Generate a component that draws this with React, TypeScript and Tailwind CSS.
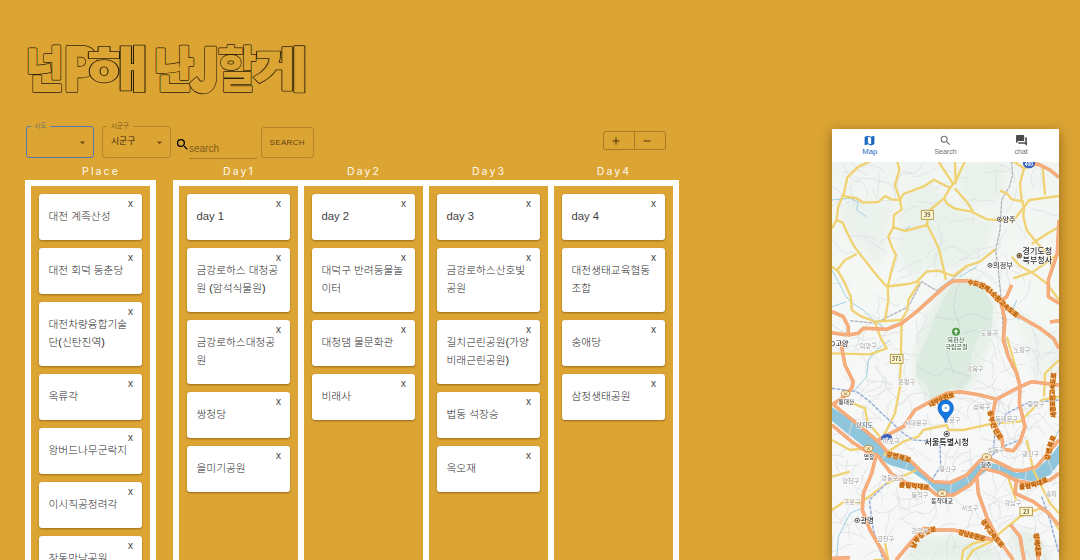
import React from "react";
import { MdMap, MdSearch, MdForum, MdArrowDropDown } from "react-icons/md";

const places: string[][] = [
  ["대전 계족산성"],
  ["대전 회덕 동춘당"],
  ["대전차량융합기술", "단(신탄진역)"],
  ["옥류각"],
  ["왕버드나무군락지"],
  ["이시직공정려각"],
  ["장동만남공원"],
];

const days: string[][][] = [
  [["day 1"], ["금강로하스 대청공", "원 (암석식물원)"], ["금강로하스대청공", "원"], ["쌍청당"], ["을미기공원"]],
  [["day 2"], ["대덕구 반려동물놀", "이터"], ["대청댐 물문화관"], ["비래사"]],
  [["day 3"], ["금강로하스산호빛", "공원"], ["길치근린공원(가양", "비래근린공원)"], ["법동 석장승"], ["옥오재"]],
  [["day 4"], ["대전생태교육협동", "조합"], ["송애당"], ["삼정생태공원"]],
];

function Card({ lines }: { lines: string[] }) {
  const latin = /^day/.test(lines[0]);
  return (
    <div className="w-full shrink-0 rounded-[3px] bg-white pb-[15px] pl-[9.5px] text-[#2a2a2a] shadow-[0_1px_2px_rgba(70,40,0,0.45)]">
      <div className="flex h-[13px] justify-end pt-[4px] pr-[9px] text-[10px] leading-[12px] text-[#444]">x</div>
      {lines.map((l) => (
        <div
          key={l}
          className={
            latin
              ? "h-[18px] text-[11.3px] leading-[19px] whitespace-nowrap text-[#3f3f3f]"
              : "h-[18px] text-[10.7px] leading-[18px] font-light whitespace-nowrap"
          }
        >
          {l}
        </div>
      ))}
    </div>
  );
}

function Column({ cards }: { cards: string[][] }) {
  return (
    <div className="flex w-[119px] flex-col gap-2 overflow-hidden bg-[#dca433] p-2">
      {cards.map((c) => (
        <Card key={c[0]} lines={c} />
      ))}
    </div>
  );
}

function Label({ children }: { children: React.ReactNode }) {
  return (
    <div className="w-[119px] pl-[17px] text-center font-['Inter',sans-serif] text-[10.5px] leading-[18px] tracking-[2.1px] text-[#fffaf0]">
      {children}
    </div>
  );
}

const title = [
  { c: "넌", x: 25.8, y: 86.8, sx: 0.86, s: 47.5, w: 3.4 },
  { c: "P", x: 63, y: 91, sx: 0.86, s: 59, w: 4 },
  { c: "난", x: 154.2, y: 86.8, sx: 0.9, s: 47.5, w: 3.4 },
  { c: "해", x: 86.5, y: 87.2, sx: 1.41, s: 48.5, w: 1.5 },
  { c: "J", x: 190, y: 90.5, sx: 0.86, s: 58, w: 4.4 },
  { c: "할", x: 217.5, y: 87.2, sx: 0.88, s: 48.5, w: 1.5 },
  { c: "게", x: 253, y: 87.2, sx: 1.25, s: 48, w: 2.2 },
];

function Title() {
  return (
    <svg width="285" height="56" viewBox="25 42 285 56" className="block overflow-visible">
      {title.map((t, i) => (
        <g key={t.c} strokeLinejoin="round">
          <g fill="#2a1f08" stroke="#2a1f08" strokeWidth={t.w}>
            <text
              id={`title-${i}`}
              transform={`translate(${t.x} ${t.y}) scale(${t.sx} 1)`}
              fontSize={t.s}
              fontWeight={900}
              fontFamily="'Noto Sans CJK KR', sans-serif"
            >
              {t.c}
            </text>
          </g>
          <use href={`#title-${i}`} fill="#dca433" stroke="#dca433" strokeWidth={Math.max(0, t.w - 1.5)} />
        </g>
      ))}
    </svg>
  );
}

const yellow = [
  "M150 124L115 140L82 172L72 220L54 262L50 300L36 325",
  "M50 300L68 308L80 335L100 375L118 400L165 460L200 500",
  "M70 228L110 235L130 248L175 246L195 228L215 238L240 240",
  "M232 124L238 150L225 195L240 240L245 268L222 285L220 322L205 350L215 380L228 405L215 450L203 500L205 540L195 600",
  "M220 322L255 333L322 315L340 350L358 390L378 480",
  "M240 240L250 222L310 200L342 179L378 198L392 202L403 188",
  "M355 124L375 155L400 192M405 124L407 190M435 124L420 155L404 192",
  "M392 200L372 235L330 270L320 315",
  "M372 235L382 252L405 266L455 275L500 298L580 302L605 270L628 240L717 228",
  "M404 205L440 245L460 275",
  "M580 124L612 145L600 190L605 240L612 262L610 290L620 330L650 368L690 410L695 440",
  "M540 212L560 220L575 238L612 245M668 140L675 225M612 145L660 130",
  "M200 500L215 498L265 492L290 485L320 455L355 452L400 468L440 438L480 425L525 388",
  "M50 452L75 420L110 402M36 440L55 455L75 490L92 530L95 570L125 590L165 605L245 600",
  "M300 485L265 540L262 570L245 600L243 700L240 800L225 880L185 960",
  "M635 372L675 345L717 320M575 410L600 438L640 460L680 490L717 540M580 475L640 455L717 400",
  "M165 605L180 650L200 685L150 703L36 700",
  "M75 840L135 865L142 905L180 950",
  "M190 1005L220 985L250 965L295 950L310 930L380 915L385 930L430 930L520 910L600 905L635 870L665 840L717 830",
  "M560 650L575 700L600 790M672 830L675 760L717 720",
  "M36 960L90 990L130 985L180 1010",
  "M36 1170L80 1140L120 1150L200 1090L290 1050",
  "M425 1320L430 1290L460 1270L520 1255L600 1190L660 1165L690 1180L717 1230",
  "M440 1320L460 1290L520 1262M195 1270L205 1320L160 1320",
  "M560 1060L590 1145M620 960L640 1050L690 1150L717 1180M36 1070L90 1055",
];

const orange = [
  "M36 575L70 590L85 620L85 645L115 640L130 625L200 628L245 610L290 575L340 530L380 495L400 483L440 482L490 495L530 535L600 590L660 625L700 655L717 685",
  "M36 638L80 645M62 665L75 735L100 785L95 805L72 830L36 855",
  "M575 495L560 530L542 545L555 600L550 660L565 710L590 760L600 800L598 850L615 920L600 965L580 992L550 988L545 950L515 900L527 838",
  "M175 960L250 920L285 870L340 840L380 820L420 815L480 825L530 838L580 810L635 785L717 795",
  "M717 300L712 400L685 480L685 530L717 550M690 606L717 602",
  "M625 125L660 135L690 150L717 172",
  "M36 850L60 870L140 935L180 970L205 1000L260 1012L300 1050L340 1085L390 1088L440 1065L480 1022L500 1012L540 1030L580 1050L610 1052L650 1040L680 1005L717 960",
  "M36 915L95 965L140 995L175 1010L215 1062L260 1090L320 1100L350 1125L400 1125L450 1095L490 1045L540 1058L590 1082L640 1092L690 1080L717 1060",
  "M170 1000L155 1060L130 1120L127 1170L150 1230L185 1290L200 1320",
  "M228 1320L270 1270L310 1225L350 1230L400 1230L450 1240L520 1260",
  "M470 1070L475 1120L500 1190L530 1250L580 1320",
  "M590 1075L585 1120L640 1145L680 1175L717 1215",
  "M572 1215L600 1250L612 1320M648 1240L655 1320M36 1315L90 1313",
];

const water = [
  "M36 450L55 485L75 525L90 545L130 570L165 605L190 620",
  "M36 240L90 235L115 245L110 270L140 290",
  "M210 660L170 690L145 720L140 770L100 815",
  "M255 328L270 320M470 440L420 470M36 560L80 545M590 540L575 580L600 600",
  "M640 1145L680 1170M50 1320L55 1250L90 1180L135 1160M717 930L700 965L690 1015",
];

const rail = [
  "M575 126L578 165L568 200L545 240L540 330L527 390L535 450L545 550L550 640L575 740L590 760",
  "M527 390L480 425L440 440L400 475L350 512L305 485L265 560L165 610L90 602",
];

const metro = [
  "M36 805L110 815L150 845L180 875L250 940L280 960L360 965L362 1040L335 1080",
  "M520 1000L525 930L560 880L620 850L717 840",
  "M200 1090L148 1140L160 1230L190 1320",
  "M665 1130L690 1200L700 1240L717 1300M480 1030L560 975L600 960",
];

function streets() {
  let seed = 17;
  const rnd = () => {
    seed = (seed * 16807) % 2147483647;
    return seed / 2147483647;
  };
  const out: string[] = [];
  for (let i = 0; i < 330; i++) {
    let x = 36 + rnd() * 681;
    let y = i < 90 ? 126 + rnd() * 560 : 640 + rnd() * 680;
    if (x > 300 && x < 510 && y > 500 && y < 810) continue;
    let a = rnd() * 6.28;
    let d = `M${x.toFixed(0)} ${y.toFixed(0)}`;
    for (let k = 0; k < 4; k++) {
      a += (rnd() - 0.5) * 1.3;
      x += Math.cos(a) * 20;
      y += Math.sin(a) * 20;
      d += `L${x.toFixed(0)} ${y.toFixed(0)}`;
    }
    out.push(d);
  }
  return out.join("");
}
const streetPath = streets();

type L = [string, number, number, number, string];
const labels: L[] = [
  ["양주", 567, 305, 21, "#333"],
  ["경기도청", 652, 402, 24, "#333"],
  ["북부청사", 652, 430, 24, "#333"],
  ["의정부", 549, 443, 21.5, "#444"],
  ["북한산", 408, 666, 18.5, "#4f7355"],
  ["국립공원", 409, 687, 18.5, "#4f7355"],
  ["고양", 66, 678, 21, "#333"],
  ["덕양구", 145, 685, 18.5, "#a0a0a0"],
  ["도봉구", 508, 646, 18.5, "#a0a0a0"],
  ["노원구", 606, 696, 18.5, "#a0a0a0"],
  ["강북구", 465, 754, 18.5, "#a0a0a0"],
  ["은평구", 260, 793, 18.5, "#a0a0a0"],
  ["성북구", 485, 866, 18.5, "#a0a0a0"],
  ["중랑구", 648, 857, 18.5, "#a0a0a0"],
  ["동대문구", 560, 903, 18.5, "#a0a0a0"],
  ["서대문구", 288, 915, 18.5, "#a0a0a0"],
  ["종로구", 396, 907, 18.5, "#a0a0a0"],
  ["마포구", 214, 968, 18.5, "#a0a0a0"],
  ["성동구", 528, 995, 18.5, "#a0a0a0"],
  ["광진구", 632, 1007, 18.5, "#a0a0a0"],
  ["통대산", 79, 851, 17, "#444"],
  ["난지도", 134, 922, 18.5, "#4f6f85"],
  ["염창", 147, 1016, 17, "#444"],
  ["서울특별시청", 380, 974, 24, "#222"],
  ["용산구", 384, 1053, 18.5, "#a0a0a0"],
  ["영등포구", 218, 1079, 18.5, "#a0a0a0"],
  ["양천구", 92, 1089, 18.5, "#a0a0a0"],
  ["동작구", 300, 1132, 18.5, "#a0a0a0"],
  ["동작대교", 366, 1150, 18, "#444"],
  ["구로구", 96, 1151, 18.5, "#a0a0a0"],
  ["청주", 498, 1040, 18, "#555"],
  ["서초구", 450, 1171, 18.5, "#a0a0a0"],
  ["강남구", 579, 1156, 18.5, "#a0a0a0"],
  ["송파", 694, 1129, 18.5, "#a0a0a0"],
  ["광명", 141, 1209, 22, "#333"],
  ["금천구", 197, 1262, 18.5, "#a0a0a0"],
  ["관악구", 300, 1240, 18.5, "#a0a0a0"],
];

const roadLabels: { t: string; d: string; n: number }[] = [
  { t: "수도권제1순환고속도로", d: "M443 487Q495 492 528 530T612 602", n: 185 },
  { t: "내부순환로", d: "M330 858Q365 828 430 820", n: 80 },
  { t: "강변북로", d: "M200 1003Q240 1010 290 1029", n: 74 },
  { t: "올림픽대로", d: "M238 1094L350 1106", n: 90 },
  { t: "올림픽대로", d: "M598 1100Q650 1102 705 1064", n: 88 },
  { t: "남부순환로", d: "M278 1284Q300 1225 365 1228", n: 95 },
  { t: "강남순환로", d: "M416 1236L515 1264", n: 82 },
  { t: "경부고속도로", d: "M488 1200Q510 1240 562 1295", n: 100 },
  { t: "동부간선로", d: "M510 872Q515 930 562 980", n: 92 },
  { t: "세종포천고속도로", d: "M702 893Q692 810 706 738", n: 135 },
  { t: "강변북로", d: "M683 1020Q688 970 712 930", n: 75 },
  { t: "양재대로", d: "M648 1240L656 1320", n: 70 },
];

function MapCanvas() {
  return (
    <svg width="227" height="398.5" viewBox="36 126 681 1195.5" className="block" fontFamily="'Noto Sans CJK KR', sans-serif">
      <defs>
        <linearGradient id="land" x1="0" y1="0" x2="0" y2="1">
          <stop offset="0" stopColor="#f1f5f1" />
          <stop offset="0.45" stopColor="#f6f8f6" />
          <stop offset="1" stopColor="#f7f7f8" />
        </linearGradient>
        <filter id="soft" x="-20%" y="-20%" width="140%" height="140%">
          <feGaussianBlur stdDeviation="10" />
        </filter>
      </defs>
      <rect x="36" y="126" width="681" height="1196" fill="url(#land)" />
      <g filter="url(#soft)" fill="#e6efe8">
        <path d="M250 220L340 190L380 240L450 285L520 310L500 390L400 450L320 440L280 480L230 400L240 320Z" opacity=".7" />
        <path d="M430 130L560 130L540 230L460 260L415 200Z" opacity=".7" />
        <path d="M90 240L220 250L200 330L180 440L110 380L60 290Z" opacity=".6" />
        <path d="M580 560L717 650L717 780L640 770L610 660Z" opacity=".5" />
        <path d="M290 1250L420 1250L520 1280L560 1320L250 1320Z" />
        <path d="M560 1230L640 1230L700 1320L590 1320Z" />
        <path d="M380 480L460 475L525 540L520 640L460 800L330 850L280 770L280 700L330 570Z" />
      </g>
      <path d="M400 492L445 488L490 505L520 560L515 625L480 645L455 700L452 780L425 808L395 800L335 842L318 790L288 770L290 720L320 660L345 590L370 540Z" fill="#dcebdf" />
      <path d="M410 500L400 560L420 620L380 700L400 760M345 590L400 600L460 580L510 600M290 740L350 770L380 745L450 770M430 640L470 630" fill="none" stroke="#c5d5cb" strokeWidth="2" />
      <path d={streetPath} fill="none" stroke="#dadde0" strokeWidth="2" />
      <g fill="none" stroke="#9fd0e4" strokeWidth="3">
        {water.map((d) => (
          <path key={d} d={d} />
        ))}
      </g>
      <path
        d="M36 862L100 903L150 945L185 975L205 1008L260 1018L300 1052L340 1085L400 1090L440 1070L485 1023L540 1035L590 1058L650 1048L690 1010L717 975L717 1030L690 1065L640 1085L580 1072L510 1045L475 1070L440 1105L400 1122L350 1115L320 1085L270 1052L210 1035L170 1010L100 955L36 903Z"
        fill="#8fc6dc"
      />
      <path d="M100 895L85 950M200 1000L180 1030M270 1015L255 1050M330 1070L318 1090M395 1085L390 1125M440 1065L450 1100M540 1030L535 1060M620 1050L615 1085M680 1010L700 1060" stroke="#d9dde0" strokeWidth="3" />
      <g fill="none" stroke="#d3d5d8" strokeWidth="4">
        {rail.map((d) => (
          <path key={d} d={d} />
        ))}
      </g>
      <g fill="none" stroke="#9ca1aa" strokeWidth="2.5" strokeDasharray="8 6">
        {rail.map((d) => (
          <path key={d} d={d} />
        ))}
      </g>
      <g fill="none" strokeLinejoin="round">
        <g stroke="#f0d272" strokeWidth="7">
          {yellow.map((d) => (
            <path key={d} d={d} />
          ))}
        </g>
        <g stroke="#d7e0ee" strokeWidth="5">
          {metro.map((d) => (
            <path key={d} d={d} />
          ))}
        </g>
        <g stroke="#8ba4cf" strokeWidth="3.5" strokeDasharray="9 6">
          {metro.map((d) => (
            <path key={d} d={d} />
          ))}
        </g>
        <g stroke="#ee9d6c" strokeWidth="10.500">
          {orange.map((d) => (
            <path key={d} d={d} />
          ))}
        </g>
        <g stroke="#f7ae7c" strokeWidth="8">
          {orange.map((d) => (
            <path key={d} d={d} />
          ))}
        </g>
      </g>
      {roadLabels.map((r, i) => (
        <g key={r.d}>
          <path id={`road-${i}`} d={r.d} fill="none" />
          <text fontSize="18.500" fontWeight="700" fill="#a8560c" stroke="#f5a64e" strokeWidth="3" paintOrder="stroke" dominantBaseline="middle">
            <textPath href={`#road-${i}`} textLength={r.n}>
              {r.t}
            </textPath>
          </text>
        </g>
      ))}
      <g fill="#fff7cf" stroke="#a98f3a" strokeWidth="2.5">
        <rect x="304" y="271" width="36" height="27" />
        <rect x="211" y="703" width="38" height="27" />
        <rect x="600" y="1162" width="37" height="25" />
      </g>
      <g fontSize="17" fill="#544a20" textAnchor="middle" fontWeight="500">
        <text x="322" y="291">39</text>
        <text x="230" y="723">371</text>
        <text x="618.5" y="1181">23</text>
      </g>
      <path d="M609 126H645V132Q641 145 627 145Q612 145 609 132Z" fill="#3b63c4" />
      <text x="627" y="138" fontSize="14" fontWeight="700" fill="#fff" textAnchor="middle">400</text>
      <path d="M184 960V950Q190 941 200 942Q212 941 216 950V960Z" fill="#3b63c4" />
      <g fill="#f9ecd0" stroke="#b5802e" strokeWidth="2.5">
        <ellipse cx="77" cy="821" rx="13" ry="9" />
        <ellipse cx="145" cy="985" rx="13" ry="9" />
        <ellipse cx="500" cy="1011" rx="14" ry="10" />
        <ellipse cx="367" cy="1120" rx="14" ry="10" />
        <path d="M72 818L82 825M82 818L72 825M140 982L150 989M150 982L140 989M495 1008L505 1015M505 1008L495 1015M362 1117L372 1124M372 1117L362 1124" />
      </g>
      <circle cx="408" cy="635" r="12" fill="#4f9a45" />
      <path d="M408 627L414 636H410V643H406V636H402Z" fill="#fff" />
      <g textAnchor="middle">
        {labels.map(([t, x, y, s, c]) => (
          <text key={t} x={x} y={y} fontSize={s} fill={c} fontWeight={c === "#a0a0a0" ? 400 : 500} stroke="#fff" strokeOpacity="0.85" strokeWidth="4" strokeLinejoin="round" paintOrder="stroke">
            {t}
          </text>
        ))}
      </g>
      <g fill="#fff" stroke="#444" strokeWidth="2.5">
        <circle cx="538" cy="298" r="6" />
        <circle cx="510" cy="436" r="6" />
        <circle cx="598" cy="407" r="7" fill="#c9a256" />
        <circle cx="38" cy="671" r="6" />
        <circle cx="112" cy="1201" r="6.5" />
        <circle cx="380" cy="942" r="8" />
      </g>
      <g fill="#333">
        <circle cx="538" cy="298" r="2.4" />
        <circle cx="510" cy="436" r="2.4" />
        <circle cx="598" cy="407" r="2.6" />
        <circle cx="112" cy="1201" r="2.6" />
        <circle cx="380" cy="942" r="4" />
      </g>
      <path d="M377 908C373 889 354 884 354 863A23 23 0 0 1 400 863C400 884 381 889 377 908Z" fill="#1478e0" stroke="#0b5cb5" strokeWidth="2" />
      <circle cx="377" cy="864" r="12" fill="#fff" />
      <circle cx="377" cy="864" r="3" fill="#5b9be0" />
    </svg>
  );
}

export default function App() {
  return (
    <div className="flex h-[560px] w-[1080px] items-start overflow-hidden bg-[#dca433] font-['Liberation_Sans','Noto_Sans_CJK_KR',sans-serif]">
      <main className="flex w-[807px] shrink-0 flex-col pl-[25px]">
        <div className="pt-[42px]">
          <Title />
        </div>

        <div className="mt-[24px] flex h-[38px] w-[641px] items-end pb-[2px]">
          <fieldset className="ml-[0.5px] h-[36px] w-[68.5px] rounded-[3px] border-[1.5px] border-[#5279b4] px-[4px]">
            <legend className="h-[8px] px-[4px] text-[6.5px] leading-[8px] text-[#6e7468]">시도</legend>
            <div className="flex h-[22px] items-center justify-end pt-[2px]">
              <MdArrowDropDown className="size-[13px] text-[#6e4b17]" />
            </div>
          </fieldset>
          <fieldset className="ml-[8px] h-[36px] w-[69px] rounded-[3px] border border-[#b88628] px-[4px]">
            <legend className="h-[8px] px-[4px] text-[6.5px] leading-[8px] text-[#7d5a1c]">시군구</legend>
            <div className="flex h-[22px] items-center justify-between pt-[2px] pl-[4px] text-[8.8px] text-[#3a2a0c]">
              시군구
              <MdArrowDropDown className="size-[13px] text-[#7a4c10]" />
            </div>
          </fieldset>
          <div className="ml-[4px] flex h-[31px] w-[82px] items-center">
            <MdSearch className="mt-[3px] size-[15px] shrink-0 text-black" />
            <div className="-ml-[1px] flex h-[32px] w-[68px] items-end border-b border-[#b08029] pb-[3px] text-[10px] leading-[13px] text-[#7f5b1a]">
              search
            </div>
          </div>
          <button className="ml-[4px] h-[31px] w-[52.500px] rounded-[3px] border border-[#b88628] text-[8px] tracking-[0.35px] text-[#5c430f]">
            SEARCH
          </button>
          <div className="mb-[8px] ml-auto flex h-[19px] w-[63px] rounded-[3px] border border-[#a87a25] text-[#4a330b]">
            <div className="flex w-[31px] items-center border-r border-[#a87a25] pl-[8px]">
              <svg width="8" height="8" viewBox="0 0 8 8" stroke="currentColor" strokeWidth="1">
                <path d="M4 0.500V7.500M0.500 4H7.500" />
              </svg>
            </div>
            <div className="flex items-center pl-[8px]">
              <svg width="8" height="8" viewBox="0 0 8 8" stroke="currentColor" strokeWidth="1">
                <path d="M0.500 4H7.500" />
              </svg>
            </div>
          </div>
        </div>

        <div className="flex h-[20px] items-center pt-[4px]">
          <div className="pl-[8px]">
            <Label>Place</Label>
          </div>
          <div className="flex gap-[6px] pl-[19px]">
            {[1, 2, 3, 4].map((n) => (
              <Label key={n}>Day{n}</Label>
            ))}
          </div>
        </div>

        <div className="flex h-[390px] gap-[17px]">
          <div className="flex bg-white p-[6px]">
            <Column cards={places} />
          </div>
          <div className="flex gap-[6px] bg-white p-[6px]">
            {days.map((d) => (
              <Column key={d[0][0]} cards={d} />
            ))}
          </div>
        </div>
      </main>

      <aside className="mt-[129px] ml-[25px] w-[227px] shrink-0 bg-white shadow-[0_3px_11px_rgba(60,35,0,0.5)]">
        <nav className="flex h-[32.500px] items-center text-[7px] leading-[8px] text-[#6f6f6f]">
          <div className="flex flex-1 flex-col items-center gap-[1px] text-[7.700px] text-[#1a66c0]">
            <MdMap className="size-[13px]" />
            Map
          </div>
          <div className="flex flex-1 flex-col items-center gap-[1px]">
            <MdSearch className="size-[13px]" />
            Search
          </div>
          <div className="flex flex-1 flex-col items-center gap-[1px]">
            <MdForum className="size-[13px] text-[#4a4a4a]" />
            chat
          </div>
        </nav>
        <MapCanvas />
      </aside>
    </div>
  );
}
